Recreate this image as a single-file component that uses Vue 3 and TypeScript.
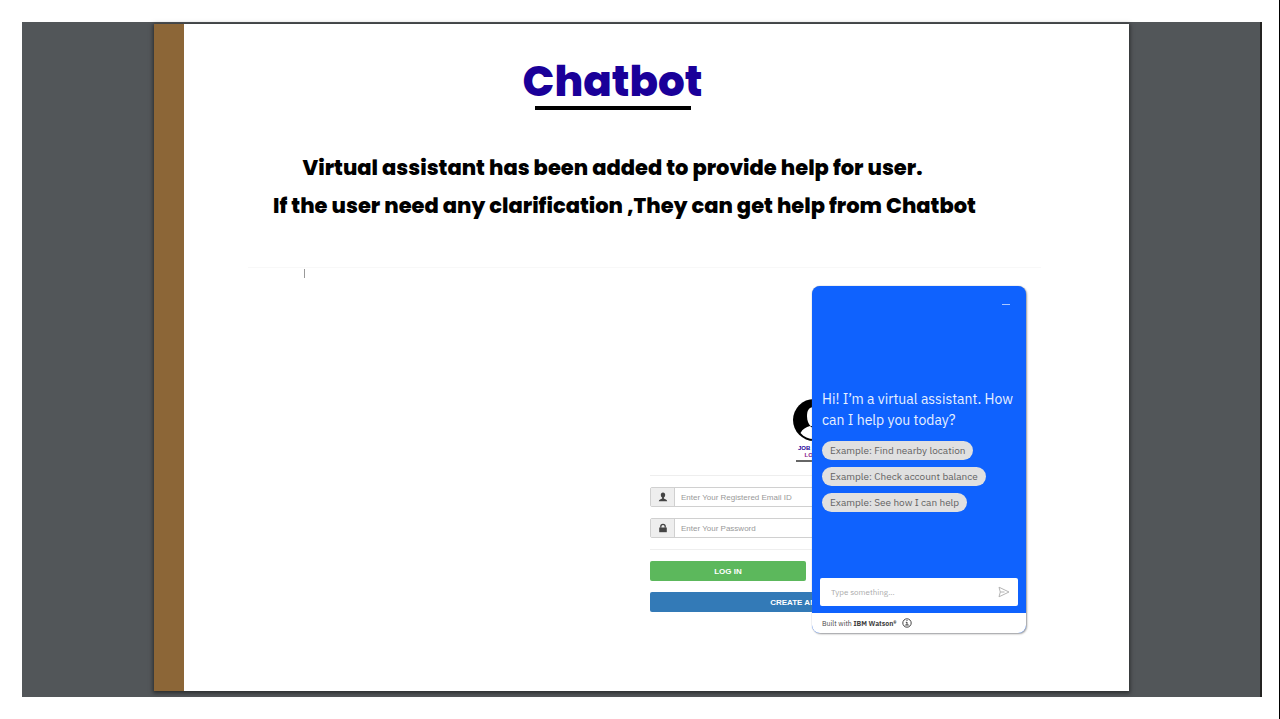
<script setup lang="ts">
import { ref } from 'vue'

const examples: string[] = [
  'Example: Find nearby location',
  'Example: Check account balance',
  'Example: See how I can help',
]
const email = ref('')
const password = ref('')
const message = ref('')
</script>

<template>
  <div class="page">
    <main class="viewer">
      <article class="slide">
        <header class="heading">
          <h1>Chatbot</h1>
        </header>
        <p class="line">Virtual assistant has been added to provide help for user.</p>
        <p class="line second">If the user need any clarification ,They can get help from Chatbot</p>

        <section class="demo">
          <span class="caret"></span>
          <form class="login" @submit.prevent>
            <div class="brand">
              <svg class="avatar" viewBox="0 0 42 42" aria-hidden="true">
                <circle cx="21" cy="21" r="21" fill="#000" />
                <path d="M21 8c-5.500 0-7 4-7 9 0 4.500 1.500 8 3.500 10h7c2-2 3.500-5.500 3.500-10 0-5-1.500-9-7-9z" fill="#fff" />
                <path d="M7.500 34c2-4 5.500-6 9.500-7l4 3 4-3c4 1 7.500 3 9.500 7-3.500 4-8 6-13.500 6s-10-2-13.500-6z" fill="#fff" />
              </svg>
              <strong class="name">JOB SITE</strong>
              <strong class="kind">LOGIN</strong>
            </div>
            <div class="fields">
              <div class="field">
                <label for="email" aria-label="Email">
                  <svg viewBox="0 0 10 10"><path d="M5 0.500c-1.500 0-2.200 1-2.200 2.300 0 1.200.5 2.200 1.300 2.800v.8C3 7 .8 7.300.8 9.200h8.400C9.200 7.300 7 7 5.900 6.400v-.8c.8-.6 1.300-1.600 1.300-2.800C7.200 1.500 6.500.5 5 .5z" fill="#444" /></svg>
                </label>
                <input id="email" v-model="email" type="email" placeholder="Enter Your Registered Email ID" />
              </div>
              <div class="field">
                <label for="password" aria-label="Password">
                  <svg viewBox="0 0 10 10"><path d="M1.200 4.500h7.600v4.700H1.200z" fill="#444" /><path d="M2.800 4.800V3.500a2.200 2.200 0 0 1 4.400 0v1.300" fill="none" stroke="#444" stroke-width="1.300" /></svg>
                </label>
                <input id="password" v-model="password" type="password" placeholder="Enter Your Password" />
              </div>
            </div>
            <div class="actions">
              <button type="submit" class="btn green">LOG IN</button>
            </div>
            <button type="button" class="btn blue">CREATE AN ACCOUNT</button>
          </form>

          <aside class="chat">
            <div class="top">
              <button type="button" class="minimize" aria-label="Minimize"></button>
            </div>
            <div class="body">
              <h2>Hi! I’m a virtual assistant. How can I help you today?</h2>
              <button v-for="item in examples" :key="item" type="button" class="chip">{{ item }}</button>
            </div>
            <div class="compose">
              <input v-model="message" type="text" placeholder="Type something..." aria-label="Message" />
              <button type="button" class="send" aria-label="Send">
                <svg viewBox="0 0 12 12"><path d="M1 1.200 11 6 1 10.800 2.300 6zM2.300 6H6.500" fill="none" stroke="#b4b4b4" stroke-width="1" stroke-linejoin="round" /></svg>
              </button>
            </div>
            <footer class="foot">
              <span>Built with <b>IBM Watson®</b></span>
              <svg viewBox="0 0 10 10"><circle cx="5" cy="5" r="4.200" fill="none" stroke="#333" stroke-width="0.900" /><path d="M5 2v1M5 4v3M3.200 7h3.600M3.800 4.300H5" fill="none" stroke="#333" stroke-width="0.900" /></svg>
            </footer>
          </aside>
        </section>
      </article>
    </main>
  </div>
</template>

<style>
body {
  margin: 0;
  background: #fff;
}
</style>

<style scoped>
* {
  box-sizing: border-box;
}
.page {
  min-height: 100vh;
  padding: 22px 17px 22px 22px;
  border-right: 1px solid #000;
  display: flex;
  font-family: "Liberation Sans", Arial, sans-serif;
}
.viewer {
  flex: 1;
  display: flex;
  padding: 2px 131px 6px 132px;
  background: #525659;
  border-right: 2px solid #242321;
}
.slide {
  flex: 1;
  min-width: 0;
  padding: 33px 88px 56px 0;
  background: #fff;
  border-left: 30px solid #8c6637;
  box-shadow: 0 1px 4px 1px rgba(0, 0, 0, 0.5);
}
.heading {
  display: flex;
  flex-direction: column;
  align-items: center;
  margin-bottom: 39px;
}
h1 {
  margin: 0;
  font: 800 42px/49px Poppins, Inter, sans-serif;
  color: #1a0099;
}
.heading::after {
  content: "";
  width: 156px;
  height: 4px;
  background: #000;
}
.line {
  margin: 0;
  font: 800 21px/38px Poppins, Inter, sans-serif;
  color: #000;
  text-align: center;
  white-space: nowrap;
}
.second {
  padding-left: 24px;
}
.demo {
  position: relative;
  margin: 42px 0 0 64px;
  padding: 1px 63px 0 56px;
  border-top: 1px solid #f8f8f8;
}
.caret {
  display: block;
  width: 1px;
  height: 9px;
  background: #999;
}
.login {
  width: 328px;
  margin: 121px 0 0 auto;
}
.brand {
  display: flex;
  flex-direction: column;
  align-items: center;
  width: 36px;
  height: 63px;
  margin: 0 auto;
  border-bottom: 2px solid #666;
  font-size: 6px;
  line-height: 7px;
  white-space: nowrap;
}
.avatar {
  flex: none;
  width: 42px;
  height: 42px;
  margin-bottom: 4px;
}
.name {
  width: 32px;
  color: #1a0099;
}
.kind {
  color: #8a1a8a;
}
.fields {
  display: grid;
  gap: 11px;
  margin: 13px 0 11px;
  padding: 11px 0;
  border: solid #eee;
  border-width: 1px 0;
}
.field {
  display: flex;
  height: 20px;
  border: 1px solid #d0d0d0;
  border-radius: 2px;
}
.field label {
  display: flex;
  align-items: center;
  justify-content: center;
  width: 24px;
  background: #eee;
  border-right: 1px solid #d0d0d0;
}
.field svg {
  width: 10px;
  height: 10px;
}
input {
  flex: 1;
  min-width: 0;
  padding: 0 6px;
  border: 0;
  outline: 0;
  background: transparent;
  font: 8px "Liberation Sans", Arial, sans-serif;
}
input::placeholder {
  color: #999;
  opacity: 1;
}
.actions {
  display: grid;
  grid-template-columns: 1fr 1fr;
  gap: 16px;
  margin-bottom: 11px;
}
button {
  padding: 0;
  border: 0;
  cursor: pointer;
}
.btn {
  display: block;
  width: 100%;
  height: 20px;
  border-radius: 2px;
  color: #fff;
  font: bold 8px "Liberation Sans", Arial, sans-serif;
}
.green {
  background: #5cb85c;
}
.blue {
  background: #337ab7;
}
.chat {
  position: absolute;
  top: 18px;
  right: 15px;
  display: flex;
  flex-direction: column;
  width: 214px;
  height: 347px;
  overflow: hidden;
  border-radius: 8px;
  background: #0f62fe;
  box-shadow: 0 0 1px #8d9bb5, 1px 1px 2px rgba(0, 0, 0, 0.4);
  font-family: "IBM Plex Sans", "Noto Sans", sans-serif;
}
.top {
  display: flex;
  justify-content: flex-end;
  padding: 14px 16px 0;
}
.minimize {
  width: 8px;
  height: 8px;
  background: linear-gradient(#a9c6ff, #a9c6ff) center / 8px 1px no-repeat;
}
.body {
  flex: 1;
  display: flex;
  flex-direction: column;
  align-items: flex-start;
  gap: 7px;
  padding: 81px 8px 0 10px;
}
h2 {
  margin: 0 0 3px;
  color: #e8f0ff;
  font-size: 14px;
  font-weight: 400;
  line-height: 21px;
}
.chip {
  height: 19px;
  padding: 0 8px;
  border-radius: 10px;
  background: #e0e0e0;
  color: #636363;
  font: 10px/19px "IBM Plex Sans", "Noto Sans", sans-serif;
  white-space: nowrap;
}
.compose {
  display: flex;
  align-items: center;
  height: 28px;
  margin: 0 8px 7px;
  padding: 0 8px 0 5px;
  border-radius: 2px;
  background: #fff;
}
.compose input {
  font: 8px "IBM Plex Sans", "Noto Sans", sans-serif;
}
.compose input::placeholder {
  color: #aaa;
}
.send {
  display: flex;
  background: none;
}
.send svg {
  width: 12px;
  height: 12px;
}
.foot {
  display: flex;
  align-items: center;
  gap: 5px;
  height: 20px;
  padding: 0 10px;
  background: #fff;
  color: #444;
  font-size: 7px;
}
.foot svg {
  width: 10px;
  height: 10px;
}
</style>
